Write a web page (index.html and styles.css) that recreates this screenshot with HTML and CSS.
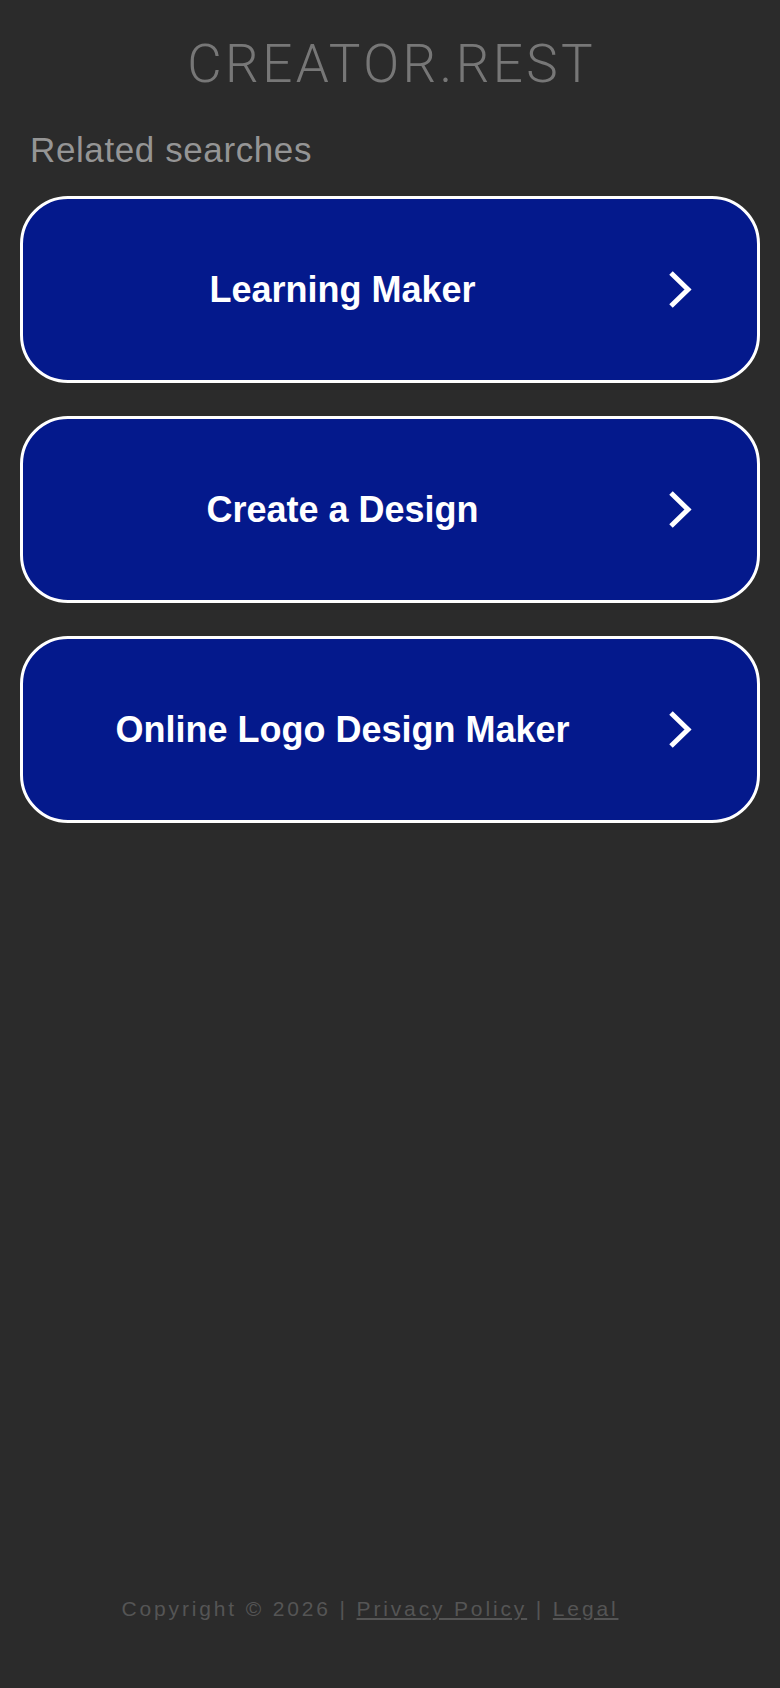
FILE: index.html
```html
<!DOCTYPE html>
<html lang="en">
<head>
<meta charset="utf-8">
<title>creator.rest</title>
<link rel="stylesheet" href="styles.css">
</head>
<body>
<div class="page">
  <header class="brand">CREATOR.REST</header>
  <main class="content">
    <h2 class="related">Related searches</h2>
    <ul class="cards">
      <li><a class="card" href="#"><span class="label">Learning Maker</span><svg class="chev" viewBox="0 0 24 39" width="24" height="39"><polyline points="3,3 20,19.5 3,36" fill="none" stroke="#fff" stroke-width="5"/></svg></a></li>
      <li><a class="card" href="#"><span class="label">Create a Design</span><svg class="chev" viewBox="0 0 24 39" width="24" height="39"><polyline points="3,3 20,19.5 3,36" fill="none" stroke="#fff" stroke-width="5"/></svg></a></li>
      <li><a class="card" href="#"><span class="label">Online Logo Design Maker</span><svg class="chev" viewBox="0 0 24 39" width="24" height="39"><polyline points="3,3 20,19.5 3,36" fill="none" stroke="#fff" stroke-width="5"/></svg></a></li>
    </ul>
  </main>
  <footer class="footer">Copyright © 2026 | <a href="#">Privacy Policy</a> | <a href="#">Legal</a></footer>
</div>
</body>
</html>
```
FILE: styles.css
```css
html, body {
  margin: 0;
  padding: 0;
  background: #2b2b2b;
}
.page {
  min-height: 100vh;
  display: flex;
  flex-direction: column;
  box-sizing: border-box;
  padding-top: 34px;
  padding-bottom: 67px;
  font-family: "Liberation Sans", Arial, sans-serif;
}
.brand {
  font-family: Roboto, "Liberation Sans", sans-serif;
  font-weight: 300;
  font-size: 53px;
  line-height: 60px;
  color: #777;
  text-align: center;
  letter-spacing: 3.4px;
  padding-left: 3.4px;
}
.content {
  padding: 0 20px;
}
.related {
  margin: 36px 0 0 10px;
  font-size: 35px;
  line-height: 40px;
  font-weight: normal;
  color: #959595;
  letter-spacing: 0.6px;
}
.cards {
  list-style: none;
  margin: 26px 0 0;
  padding: 0;
  display: flex;
  flex-direction: column;
  gap: 33px;
}
.card {
  box-sizing: border-box;
  height: 187px;
  display: flex;
  align-items: center;
  border: 3px solid #fff;
  border-radius: 48px;
  background: #04198c;
  color: #fff;
  text-decoration: none;
  padding-right: 65px;
}
.label {
  flex: 1;
  text-align: center;
  font-weight: bold;
  font-size: 36px;
  line-height: 40px;
}
.chev {
  flex: none;
  margin-left: 6px;
}
.footer {
  margin-top: auto;
  text-align: center;
  font-size: 21px;
  line-height: 24px;
  letter-spacing: 2.85px;
  color: #555;
  padding-right: 40px;
}
.footer a {
  color: #555;
  text-decoration: underline;
}
```
